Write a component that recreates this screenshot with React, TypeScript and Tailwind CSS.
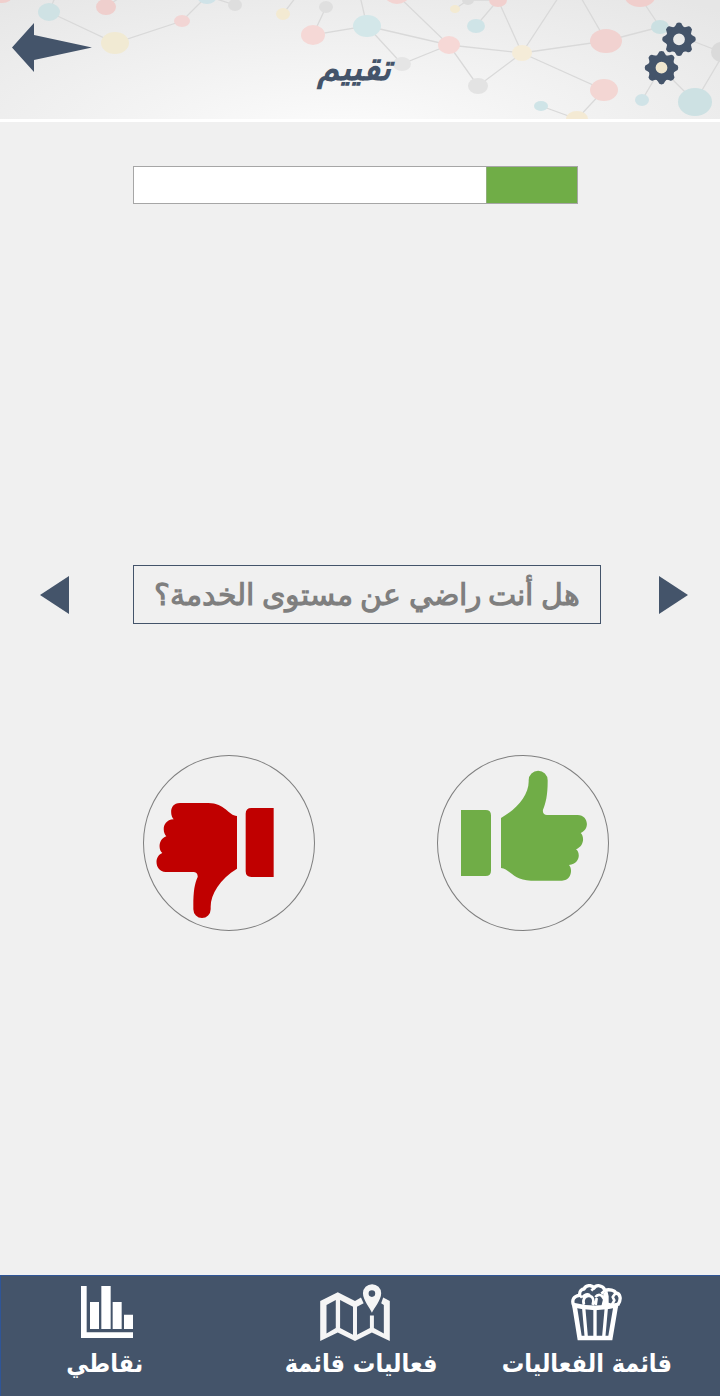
const NODES: [number, number, number, number, string][] = [
  [2, -5, 11, 8, "#f0cfcd"], [106, 7, 10, 8, "#efcfcd"], [49, 12, 11, 9, "#cfe2e4"],
  [115, 43, 14, 11, "#f1ead3"], [182, 21, 8, 6, "#f2d5d4"], [207, -4, 10, 8, "#d0e3e8"],
  [235, 5, 7, 6, "#dedede"], [283, 14, 7, 6, "#f3ead2"], [326, 7, 7, 6, "#dfdfdf"],
  [313, 35, 12, 10, "#f5d8d6"], [367, 26, 14, 11, "#d3e7e9"], [397, -5, 12, 9, "#f3d4d2"],
  [449, 45, 11, 9, "#f6d8d6"], [402, 64, 9, 7, "#e5e5e5"], [478, 86, 10, 8, "#e3e3e3"],
  [455, 9, 5, 4, "#f3ead2"], [468, 0, 6, 5, "#dcdcdc"], [476, 26, 9, 7, "#cfe4e7"],
  [498, 0, 9, 7, "#f1d0ce"], [522, 53, 10, 8, "#f5ecd8"], [606, 41, 16, 12, "#f1d2d0"],
  [604, 90, 14, 11, "#f3d6d3"], [541, 106, 7, 5, "#cfe4e7"], [577, 119, 11, 8, "#f4ead4"],
  [642, 100, 7, 6, "#d0e3e7"], [695, 102, 17, 14, "#cde1e3"], [721, 52, 10, 10, "#dadada"],
  [660, 27, 9, 7, "#cbe0e2"], [640, -3, 15, 10, "#f0cecc"], [661, 68, 9, 8, "#efe6cf"],
];

const LINKS =
  "M49 12L56-5M106 7L122-4M49 12L115 43L182 21L207-4L235 5M283 14L296-3M326 7L313 35L367 26L360-4M367 26L449 45L397-5M367 26L402 64L449 45L478 86M478 86L522 53L449 45M455 9L468 0H498L476 26M498 0L522 53L560-5M522 53L606 41L580-4M522 53L604 90L577 119L541 106M606 41L660 27L640-3M661 68L642 100M661 68L695 102L721 58M690 40L721 52";

function NetworkBackdrop() {
  return (
    <svg className="absolute inset-0 h-full w-full" viewBox="0 0 720 119" preserveAspectRatio="xMidYMid slice" aria-hidden="true">
      <path d={LINKS} fill="none" stroke="#d9d9d9" strokeWidth="1.3" />
      {NODES.map(([cx, cy, rx, ry, fill]) => (
        <ellipse key={`${cx}-${cy}`} cx={cx} cy={cy} rx={rx} ry={ry} fill={fill} />
      ))}
    </svg>
  );
}

function Gear({ cx, cy }: { cx: number; cy: number }) {
  return (
    <g transform={`translate(${cx} ${cy})`}>
      <circle r="9.6" fill="none" stroke="#44546a" strokeWidth="7.4" />
      {[0, 45, 90, 135, 180, 225, 270, 315].map((a) => (
        <path key={a} d="M-4.8-12L-3.2-14.4Q-2.8-16.8 0-16.8Q2.8-16.8 3.2-14.4L4.8-12Z" fill="#44546a" transform={`rotate(${a})`} />
      ))}
    </g>
  );
}

function ChartIcon() {
  return (
    <svg className="h-[52px] w-[52px]" viewBox="243 63 156 156" fill="#fff" aria-hidden="true">
      <path d="M243 63h17v139h139v17H243zM270 111h27v81h-27zM304 63h28v129h-28zM338 111h27v81h-27zM372 149h27v43h-27z" />
    </svg>
  );
}

function MapIcon() {
  return (
    <svg className="h-[57px] w-[70px]" viewBox="240 54 210 172" aria-hidden="true">
      <path
        fill="#f5f5f5"
        fillRule="evenodd"
        d="M240 105L293 79L345 105L363 95L371 112L351 123V207L390 187V149H402V187L432 203V117L424 112L430 95L450 105V226L396 200L345 226L293 200L240 226ZM259 117V203L287 187V102ZM300 102V187L339 207V123Z"
      />
      <path
        fill="#f5f5f5"
        fillRule="evenodd"
        d="M396 141C391 127 369 103 369 82A27.500 27.500 0 0 1 424 82C424 103 402 127 396 141ZM396 73A10 10 0 1 0 396 93A10 10 0 1 0 396 73Z"
      />
    </svg>
  );
}

function PopcornIcon() {
  return (
    <svg className="h-[57px] w-[51px]" viewBox="275 57 153 171" fill="none" stroke="#fff" aria-hidden="true">
      <path strokeWidth="14" d="M285 119L301 219H393L410 119" />
      <path strokeWidth="14" d="M281 120Q347 137 415 120" />
      <path strokeWidth="10" d="M313 128L321 218M347 130V218M381 128L373 218" />
      <path
        strokeWidth="10"
        strokeLinejoin="round"
        d="M283 121C276 105 284 92 301 91C299 77 309 72 314 72C320 59 338 59 344 69C351 58 371 60 377 76C390 72 407 76 409 84C424 85 427 104 415 121"
      />
      <path fill="#fff" stroke="none" d="M372 84L384 77L388 94L388 113L405 118L366 124L371 103Z" />
      <path
        strokeWidth="8"
        strokeLinejoin="round"
        d="M301 91L308 98M314 119C308 103 318 93 328 93C340 92 346 105 340 120M309 98C316 89 324 86 332 91M344 69L336 77M348 96C356 86 368 89 371 98C378 105 375 115 371 120M352 99L349 120M377 76L366 86M409 84L400 96L405 106L398 119"
      />
    </svg>
  );
}

const THUMB_UP =
  "M108 195H182Q198 195 198 211V377Q198 393 182 393H108ZM228 219C275 193 311 150 311 110V106A28.500 28.500 0 0 1 368 106V110C368 150 362 175 354 194C352 204 358 210 366 210H458C490 210 496 253 467 264C477 272 480 302 453 313C466 322 467 355 432 360C444 372 439 407 411 407H318C265 407 255 372 228 369Z";

const THUMB_DOWN =
  "M431 189H364Q347 189 347 206V379Q347 396 364 396H431ZM321 371C270 402 242 448 242 485V493A26 26 0 0 1 190 493V480C190 440 194 415 203 396C204 386 198 381 190 381H107C75 381 70 334 97 324C84 314 85 282 109 274C97 264 95 225 131 223C120 212 117 174 150 174H235C285 174 295 212 321 213Z";

export default function App() {
  return (
    <div className="flex min-h-screen flex-col bg-[#f0f0f0] font-['Liberation_Serif',serif]">
      <header className="relative flex h-[122px] items-start justify-between overflow-hidden border-b-3 border-white bg-[radial-gradient(ellipse_75%_150%_at_47%_115%,#fcfcfc,#e6e6e6)] pr-6 pl-3">
        <NetworkBackdrop />
        <button type="button" aria-label="رجوع" className="relative mt-[23px]">
          <svg className="h-[49px] w-20" viewBox="0 0 80 49" fill="#44546a" aria-hidden="true">
            <path d="M0 24.500L22 0V12L80 24.500L22 37V49Z" />
          </svg>
        </button>
        <h1 dir="rtl" className="relative mt-10 mr-7 text-[36px] leading-[56px] font-bold text-[#44546a] italic">تقييم</h1>
        <button type="button" aria-label="الإعدادات" className="relative mt-[22px]">
          <svg className="h-[63px] w-[52px]" viewBox="644 22 52 63" aria-hidden="true">
            <Gear cx={679} cy={39.3} />
            <Gear cx={661.5} cy={67.7} />
          </svg>
        </button>
      </header>

      <main className="flex flex-1 flex-col">
        <div
          role="progressbar"
          aria-label="التقدم"
          aria-valuenow={20}
          aria-valuemin={0}
          aria-valuemax={100}
          className="mt-11 ml-[18.5%] flex h-[38px] w-[61.8%] justify-end border border-[#a6a6a6] bg-white"
        >
          <div className="w-[20.5%] border-l border-[#8faf78] bg-[#70ad47]" />
        </div>

        <section className="mt-[361px] flex items-center pr-8 pl-10">
          <button type="button" aria-label="السابق">
            <svg className="h-[38px] w-[29px]" viewBox="0 0 29 38" fill="#44546a" aria-hidden="true">
              <path d="M29 0V38L0 19Z" />
            </svg>
          </button>
          <h2 dir="rtl" className="mr-[58px] ml-16 flex h-[59px] min-w-0 flex-1 items-center justify-center border border-[#44546a] text-[30px] leading-10 font-bold whitespace-nowrap text-[#7f7f7f]">
            هل أنت راضي عن مستوى الخدمة؟
          </h2>
          <button type="button" aria-label="التالي">
            <svg className="h-[38px] w-[29px]" viewBox="0 0 29 38" fill="#44546a" aria-hidden="true">
              <path d="M0 0V38L29 19Z" />
            </svg>
          </button>
        </section>

        <section className="mt-[131px] mb-12 flex justify-center gap-[122px] pl-8">
          <button type="button" aria-label="غير راضي" className="h-44 w-[172px] rounded-[50%] border border-[#7f7f7f]">
            <svg className="h-full w-full" viewBox="42 33 510 522" fill="#c00000" aria-hidden="true">
              <path d={THUMB_DOWN} />
            </svg>
          </button>
          <button type="button" aria-label="راضي" className="h-44 w-[172px] rounded-[50%] border border-[#7f7f7f]">
            <svg className="h-full w-full" viewBox="39 33 510 522" fill="#70ad47" aria-hidden="true">
              <path d={THUMB_UP} />
            </svg>
          </button>
        </section>
      </main>

      <nav className="grid h-[121px] grid-cols-[208fr_294fr_218fr] border-t border-l border-[#2f5597] bg-[#44546a] pt-2 font-['DejaVu_Sans_Condensed','DejaVu_Sans',sans-serif] text-[25px] leading-10 font-bold whitespace-nowrap text-white">
        <a href="#points" className="flex flex-col items-center">
          <span className="flex h-[60px] items-start pt-[2px] pl-1"><ChartIcon /></span>
          <span dir="rtl">نقاطي</span>
        </a>
        <a href="#current" className="flex flex-col items-center pl-3">
          <span className="flex h-[60px] items-start pr-3"><MapIcon /></span>
          <span dir="rtl">فعاليات قائمة</span>
        </a>
        <a href="#events" className="flex flex-col items-center pr-12">
          <span className="flex h-[60px] items-start pl-5"><PopcornIcon /></span>
          <span dir="rtl">قائمة الفعاليات</span>
        </a>
      </nav>
    </div>
  );
}
